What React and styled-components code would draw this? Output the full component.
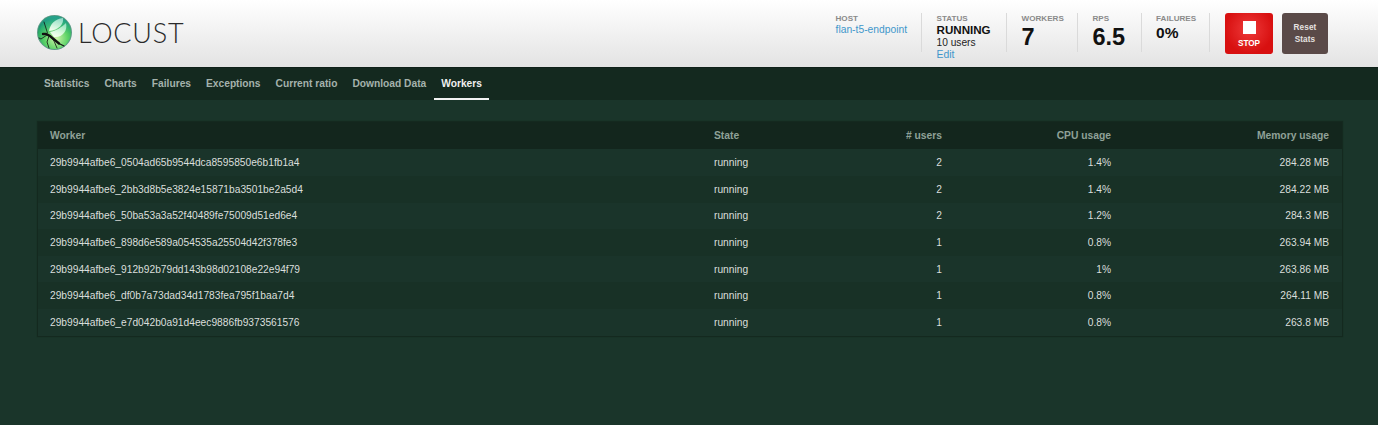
import React from "react";
import styled, { createGlobalStyle } from "styled-components";

const GlobalStyle = createGlobalStyle`
  html, body {
    margin: 0;
    padding: 0;
    background: #1a352a;
    font-family: "Liberation Sans", Arial, sans-serif;
  }
`;

const Page = styled.div`
  min-height: 425px;
  background: #1a352a;
`;

const Header = styled.header`
  height: 68px;
  box-sizing: border-box;
  padding: 0 50px 0 37px;
  display: flex;
  align-items: flex-start;
  justify-content: space-between;
  background: linear-gradient(to bottom, #ffffff 0%, #e3e3e3 100%);
  border-bottom: 1px solid #0f2119;
`;

const Logo = styled.div`
  display: flex;
  align-items: center;
  gap: 6px;
  margin-top: 15px;
  height: 35px;
`;

const LogoText = styled.span`
  font-family: Lato, "Open Sans", sans-serif;
  font-weight: 300;
  font-size: 27px;
  letter-spacing: 0.75px;
  color: #2a2a2a;
`;

const Boxes = styled.div`
  display: flex;
  align-items: flex-start;
  margin-top: 13px;
`;

const Stat = styled.div`
  box-sizing: border-box;
  width: ${(p) => p.$width}px;
  height: 39px;
  padding: 1px 0 0 14.5px;
  border-right: 1px solid #dadada;
  white-space: nowrap;
`;

const Label = styled.div`
  font-size: 8.1px;
  line-height: 9px;
  font-weight: 700;
  color: #8a8a8a;
`;

const HostLink = styled.a`
  display: block;
  font-size: 10.3px;
  line-height: 13px;
  color: #3f97cb;
`;

const StatusValue = styled.div`
  font-size: 11.6px;
  line-height: 14px;
  font-weight: 700;
  color: #111;
`;

const SubValue = styled.div`
  font-size: 10.2px;
  line-height: 12px;
  color: #222;
`;

const EditLink = styled.a`
  display: block;
  font-size: 10.4px;
  line-height: 11px;
  color: #3f97cb;
`;

const BigValue = styled.div`
  margin-top: 1px;
  font-size: 23.5px;
  line-height: 26px;
  font-weight: 700;
  color: #111;
`;

const SmallValue = styled.div`
  font-size: 15.5px;
  line-height: 20px;
  font-weight: 700;
  color: #111;
`;

const Actions = styled.div`
  display: flex;
  gap: 9px;
  margin-left: 15px;
`;

const ActionButton = styled.button`
  height: 41px;
  width: ${(p) => p.$width}px;
  padding: 0;
  border: none;
  border-radius: 3px;
  font-family: inherit;
  font-weight: 700;
  color: #fff;
  display: flex;
  flex-direction: column;
  align-items: center;
  justify-content: center;
`;

const StopButton = styled(ActionButton)`
  background: radial-gradient(circle at 50% 40%, #ee3a3a 0%, #d81010 70%);
  font-size: 8.2px;
  gap: 5px;
  padding-top: 1px;
`;

const StopSquare = styled.span`
  width: 13px;
  height: 13px;
  background: #fff;
`;

const ResetButton = styled(ActionButton)`
  background: #5a4a48;
  color: #e6e2e0;
  font-size: 8.2px;
  line-height: 12px;
  letter-spacing: 0.1px;
  padding-top: 1px;
`;

const Nav = styled.nav`
  height: 32px;
  padding-left: 36.5px;
  display: flex;
  background: #14291f;
`;

const Tab = styled.a`
  box-sizing: border-box;
  height: 32px;
  padding: 9px 7.5px 0;
  font-size: 10.22px;
  font-weight: 700;
  line-height: 13px;
  color: ${(p) => (p.$active ? "#f0f0f0" : "#a4b2ac")};
  border-bottom: 2px solid ${(p) => (p.$active ? "#f2f2f2" : "transparent")};
`;

const Main = styled.main`
  padding: 22px 36px 0 38px;
`;

const Table = styled.table`
  width: 100%;
  table-layout: fixed;
  border-collapse: collapse;
  box-shadow: 0 0 1px 1px #14291f;
  font-size: 10.22px;
`;

const HeadCell = styled.th`
  height: 27.4px;
  padding: 0 12px;
  background: #13261d;
  color: #8fa198;
  font-size: 10.3px;
  font-weight: 700;
  text-align: ${(p) => (p.$right ? "right" : "left")};
  &:last-child {
    padding-right: 13px;
  }
`;

const Row = styled.tr`
  background: ${(p) => (p.$odd ? "#1a342a" : "#183126")};
`;

const Cell = styled.td`
  height: 26.6px;
  padding: 0 12px;
  color: #dadfdc;
  text-align: ${(p) => (p.$right ? "right" : "left")};
  &:last-child {
    padding-right: 13px;
  }
`;

const workers = [
  ["29b9944afbe6_0504ad65b9544dca8595850e6b1fb1a4", 2, "1.4%", "284.28 MB"],
  ["29b9944afbe6_2bb3d8b5e3824e15871ba3501be2a5d4", 2, "1.4%", "284.22 MB"],
  ["29b9944afbe6_50ba53a3a52f40489fe75009d51ed6e4", 2, "1.2%", "284.3 MB"],
  ["29b9944afbe6_898d6e589a054535a25504d42f378fe3", 1, "0.8%", "263.94 MB"],
  ["29b9944afbe6_912b92b79dd143b98d02108e22e94f79", 1, "1%", "263.86 MB"],
  ["29b9944afbe6_df0b7a73dad34d1783fea795f1baa7d4", 1, "0.8%", "264.11 MB"],
  ["29b9944afbe6_e7d042b0a91d4eec9886fb9373561576", 1, "0.8%", "263.8 MB"],
];

const tabs = [
  "Statistics",
  "Charts",
  "Failures",
  "Exceptions",
  "Current ratio",
  "Download Data",
  "Workers",
];

const LogoMark = () => (
  <svg width="35" height="35" viewBox="0 0 35 35">
    <defs>
      <radialGradient id="ball" cx="0.55" cy="0.68" r="0.62">
        <stop offset="0" stopColor="#d0f4aa" />
        <stop offset="0.55" stopColor="#5fd468" />
        <stop offset="0.88" stopColor="#2cb060" />
        <stop offset="1" stopColor="#178a60" />
      </radialGradient>
      <linearGradient id="top" x1="0" y1="0" x2="0" y2="1">
        <stop offset="0" stopColor="#2aa896" stopOpacity="0.85" />
        <stop offset="0.55" stopColor="#2aa896" stopOpacity="0" />
      </linearGradient>
      <linearGradient id="shine" x1="0.8" y1="0" x2="0.3" y2="1">
        <stop offset="0" stopColor="#d8fff0" stopOpacity="0.6" />
        <stop offset="1" stopColor="#f8fff4" stopOpacity="0.95" />
      </linearGradient>
    </defs>
    <circle cx="17.5" cy="17.5" r="17.5" fill="#5c9a86" />
    <circle cx="17.5" cy="17.5" r="16.5" fill="url(#ball)" />
    <circle cx="17.5" cy="17.5" r="16.5" fill="url(#top)" />
    <path d="M12 16 C13 9 18 4 26 3 C27 9 22 15 12 16 Z" fill="url(#shine)" />
    <path d="M13 17 C19 16 25 12 29 8 C31 16 25 23 17 22 Z" fill="url(#shine)" />
    <g stroke="#121212" fill="none" strokeLinecap="round">
      <path d="M6 19 L9 19 L13 21 L22 28.5" strokeWidth="2.4" />
      <path d="M10.5 18 L7 7" strokeWidth="0.8" />
      <path d="M10 20 L4 24 L2 23" strokeWidth="0.8" />
      <path d="M12 21 L10 27 L12 33" strokeWidth="0.8" />
      <path d="M14 22 L17 26 L20 33" strokeWidth="0.8" />
      <path d="M22 28.5 L27 31" strokeWidth="1.1" />
    </g>
  </svg>
);

export default function App() {
  return (
    <Page>
      <GlobalStyle />
      <Header>
        <Logo>
          <LogoMark />
          <LogoText>LOCUST</LogoText>
        </Logo>
        <Boxes>
          <Stat $width={101}>
            <Label>HOST</Label>
            <HostLink>flan-t5-endpoint</HostLink>
          </Stat>
          <Stat $width={85}>
            <Label>STATUS</Label>
            <StatusValue>RUNNING</StatusValue>
            <SubValue>10 users</SubValue>
            <EditLink>Edit</EditLink>
          </Stat>
          <Stat $width={71}>
            <Label>WORKERS</Label>
            <BigValue>7</BigValue>
          </Stat>
          <Stat $width={63.6}>
            <Label>RPS</Label>
            <BigValue>6.5</BigValue>
          </Stat>
          <Stat $width={68.4}>
            <Label>FAILURES</Label>
            <SmallValue>0%</SmallValue>
          </Stat>
          <Actions>
            <StopButton $width={48}>
              <StopSquare />
              STOP
            </StopButton>
            <ResetButton $width={46}>
              Reset
              <br />
              Stats
            </ResetButton>
          </Actions>
        </Boxes>
      </Header>
      <Nav>
        {tabs.map((t) => (
          <Tab key={t} $active={t === "Workers"}>
            {t}
          </Tab>
        ))}
      </Nav>
      <Main>
        <Table>
          <colgroup>
            <col style={{ width: 664 }} />
            <col style={{ width: 120 }} />
            <col style={{ width: 132 }} />
            <col style={{ width: 169 }} />
            <col style={{ width: 219 }} />
          </colgroup>
          <thead>
            <tr>
              <HeadCell>Worker</HeadCell>
              <HeadCell>State</HeadCell>
              <HeadCell $right># users</HeadCell>
              <HeadCell $right>CPU usage</HeadCell>
              <HeadCell $right>Memory usage</HeadCell>
            </tr>
          </thead>
          <tbody>
            {workers.map((w, i) => (
              <Row key={w[0]} $odd={i % 2 === 0}>
                <Cell>{w[0]}</Cell>
                <Cell>running</Cell>
                <Cell $right>{w[1]}</Cell>
                <Cell $right>{w[2]}</Cell>
                <Cell $right>{w[3]}</Cell>
              </Row>
            ))}
          </tbody>
        </Table>
      </Main>
    </Page>
  );
}
